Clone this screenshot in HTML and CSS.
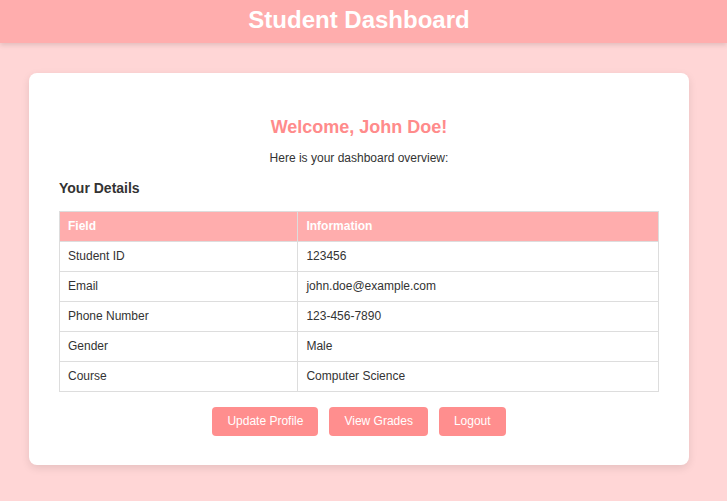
FILE: index.html
```html
<!DOCTYPE html>
<html lang="en">
<head>
<meta charset="utf-8">
<title>Student Dashboard</title>
<link rel="stylesheet" href="styles.css">
</head>
<body>
<header class="topbar">
  <h1 class="topbar-title">Student Dashboard</h1>
</header>
<main class="page">
  <section class="card">
    <h2 class="welcome">Welcome, John Doe!</h2>
    <p class="intro">Here is your dashboard overview:</p>
    <h3 class="section-title">Your Details</h3>
    <table class="details">
      <thead>
        <tr><th class="col-field">Field</th><th>Information</th></tr>
      </thead>
      <tbody>
        <tr><td>Student ID</td><td>123456</td></tr>
        <tr><td>Email</td><td>john.doe@example.com</td></tr>
        <tr><td>Phone Number</td><td>123-456-7890</td></tr>
        <tr><td>Gender</td><td>Male</td></tr>
        <tr><td>Course</td><td>Computer Science</td></tr>
      </tbody>
    </table>
    <div class="actions">
      <button class="btn" type="button">Update Profile</button>
      <button class="btn" type="button">View Grades</button>
      <button class="btn" type="button">Logout</button>
    </div>
  </section>
</main>
</body>
</html>
```
FILE: styles.css
```css
* { box-sizing: border-box; }

html, body {
  margin: 0;
  padding: 0;
}

body {
  background: #ffd6d6;
  font-family: "Liberation Sans", Arial, sans-serif;
  font-size: 12px;
  color: #333;
  min-height: 501px;
}

.topbar {
  background: #ffadad;
  padding: 6px 9px 9px 0;
  box-shadow: 0 2px 5px rgba(0, 0, 0, 0.12);
  position: relative;
}

.topbar-title {
  margin: 0;
  text-align: center;
  color: #fff;
  font-size: 24px;
  line-height: 28px;
  font-weight: bold;
}

.page {
  padding: 30px 38px 0 29px;
}

.card {
  width: 660px;
  background: #fff;
  border-radius: 8px;
  box-shadow: 0 3px 8px rgba(0, 0, 0, 0.1);
  padding: 30px 30px 29px;
}

.welcome {
  margin: 14px 0 0;
  text-align: center;
  color: #ff8b8b;
  font-size: 18px;
  line-height: 21px;
  font-weight: bold;
}

.intro {
  margin: 13px 0 0;
  text-align: center;
  line-height: 14px;
}

.section-title {
  margin: 15px 0 0;
  font-size: 14px;
  line-height: 16px;
  font-weight: bold;
}

.details {
  margin-top: 15px;
  width: 100%;
  border-collapse: collapse;
}

.details th,
.details td {
  border: 1px solid #ddd;
  padding: 8px 8px;
  line-height: 13px;
  text-align: left;
  font-size: 12px;
}

.details th {
  background: #ffadad;
  color: #fff;
  font-weight: bold;
}

.col-field { width: 39.8%; }

.actions {
  margin-top: 15px;
  display: flex;
  justify-content: center;
  gap: 11px;
}

.btn {
  background: #ff8e8e;
  color: #fff;
  border: none;
  border-radius: 4px;
  padding: 8px 15px;
  font-family: "Liberation Sans", Arial, sans-serif;
  font-size: 12px;
  line-height: 13px;
  cursor: pointer;
}
```
